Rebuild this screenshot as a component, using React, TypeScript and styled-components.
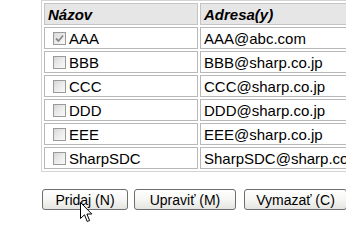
import React from 'react';
import styled, { createGlobalStyle } from 'styled-components';

const GlobalStyle = createGlobalStyle`
    html, body {
        margin: 0;
        padding: 0;
        background: #ffffff;
        overflow: hidden;
    }
    body {
        font-family: "Liberation Sans", Arial, sans-serif;
        color: #000;
    }
`;

const Page = styled.div`
    position: relative;
    width: 346px;
    height: 243px;
    padding-left: 41px;
    box-sizing: border-box;
`;

const Table = styled.table`
    width: 330px;
    table-layout: fixed;
    border-collapse: separate;
    border-spacing: 2px;
    border: 1px solid #d4d4d4;
    font-size: 15px;
`;

const HeaderCell = styled.th`
    height: 20px;
    padding: 0 3px;
    border: 1px solid #c4c4c4;
    background: #e6e6e6;
    text-align: left;
    font-style: italic;
    font-weight: bold;
    width: ${props => props.$width || 'auto'};
`;

const Cell = styled.td`
    height: 20px;
    padding: 0 3px;
    border: 1px solid #b8b8b8;
    white-space: nowrap;
    overflow: hidden;
`;

const NameWrap = styled.div`
    display: flex;
    align-items: center;
    gap: 3px;
    padding-left: 5px;
`;

const Box = styled.span`
    display: inline-flex;
    align-items: center;
    justify-content: center;
    width: 11px;
    height: 11px;
    border: 1px solid #9a9a9a;
    background: linear-gradient(135deg, #d8d8d8 0%, #eeeeee 60%, #fafafa 100%);
`;

const ButtonRow = styled.div`
    display: flex;
    gap: 6px;
    margin-top: 17px;
    padding-left: 1px;
`;

const Button = styled.button`
    width: ${props => props.$width}px;
    margin-left: ${props => props.$offset || 0}px;
    height: 21px;
    padding: 0;
    border: 1px solid #6e6e6e;
    border-radius: 3px;
    background: linear-gradient(to bottom, #ffffff 0%, #f6f6f4 50%, #e4e4e0 100%);
    font-family: "Liberation Sans", Arial, sans-serif;
    font-size: 14px;
    color: #000;
    flex-shrink: 0;
`;

const Pointer = styled.svg`
    position: absolute;
    left: 80px;
    top: 202px;
`;

const CheckBox: React.FC<{ checked?: boolean }> = ({ checked }) => (
    <Box>
        {checked && (
            <svg width="9" height="9" viewBox="0 0 9 9">
                <path d="M1 4.5 L3.5 7 L8 1.5" stroke="#8a8a8a" strokeWidth="1.8" fill="none" />
            </svg>
        )}
    </Box>
);

const rows = [
    { name: 'AAA', mail: 'AAA@abc.com', checked: true },
    { name: 'BBB', mail: 'BBB@sharp.co.jp' },
    { name: 'CCC', mail: 'CCC@sharp.co.jp' },
    { name: 'DDD', mail: 'DDD@sharp.co.jp' },
    { name: 'EEE', mail: 'EEE@sharp.co.jp' },
    { name: 'SharpSDC', mail: 'SharpSDC@sharp.co.jp' },
];

const App: React.FC = () => (
    <Page>
        <GlobalStyle />
        <Table>
            <thead>
                <tr>
                    <HeaderCell $width="146px">Názov</HeaderCell>
                    <HeaderCell>Adresa(y)</HeaderCell>
                </tr>
            </thead>
            <tbody>
                {rows.map(row => (
                    <tr key={row.name}>
                        <Cell>
                            <NameWrap>
                                <CheckBox checked={row.checked} />
                                {row.name}
                            </NameWrap>
                        </Cell>
                        <Cell>{row.mail}</Cell>
                    </tr>
                ))}
            </tbody>
        </Table>
        <ButtonRow>
            <Button $width={86}>Pridaj (N)</Button>
            <Button $width={102}>Upraviť (M)</Button>
            <Button $width={103} $offset={2}>Vymazať (C)</Button>
        </ButtonRow>
        <Pointer width="13" height="21" viewBox="0 0 13 21">
            <path
                d="M0.5 0.5 L0.5 16.5 L4.5 12.8 L7.2 19.5 L9.6 18.5 L6.9 12 L11.8 12 Z"
                fill="#ffffff"
                stroke="#000000"
                strokeWidth="1"
                strokeLinejoin="miter"
            />
        </Pointer>
    </Page>
);

export default App;
